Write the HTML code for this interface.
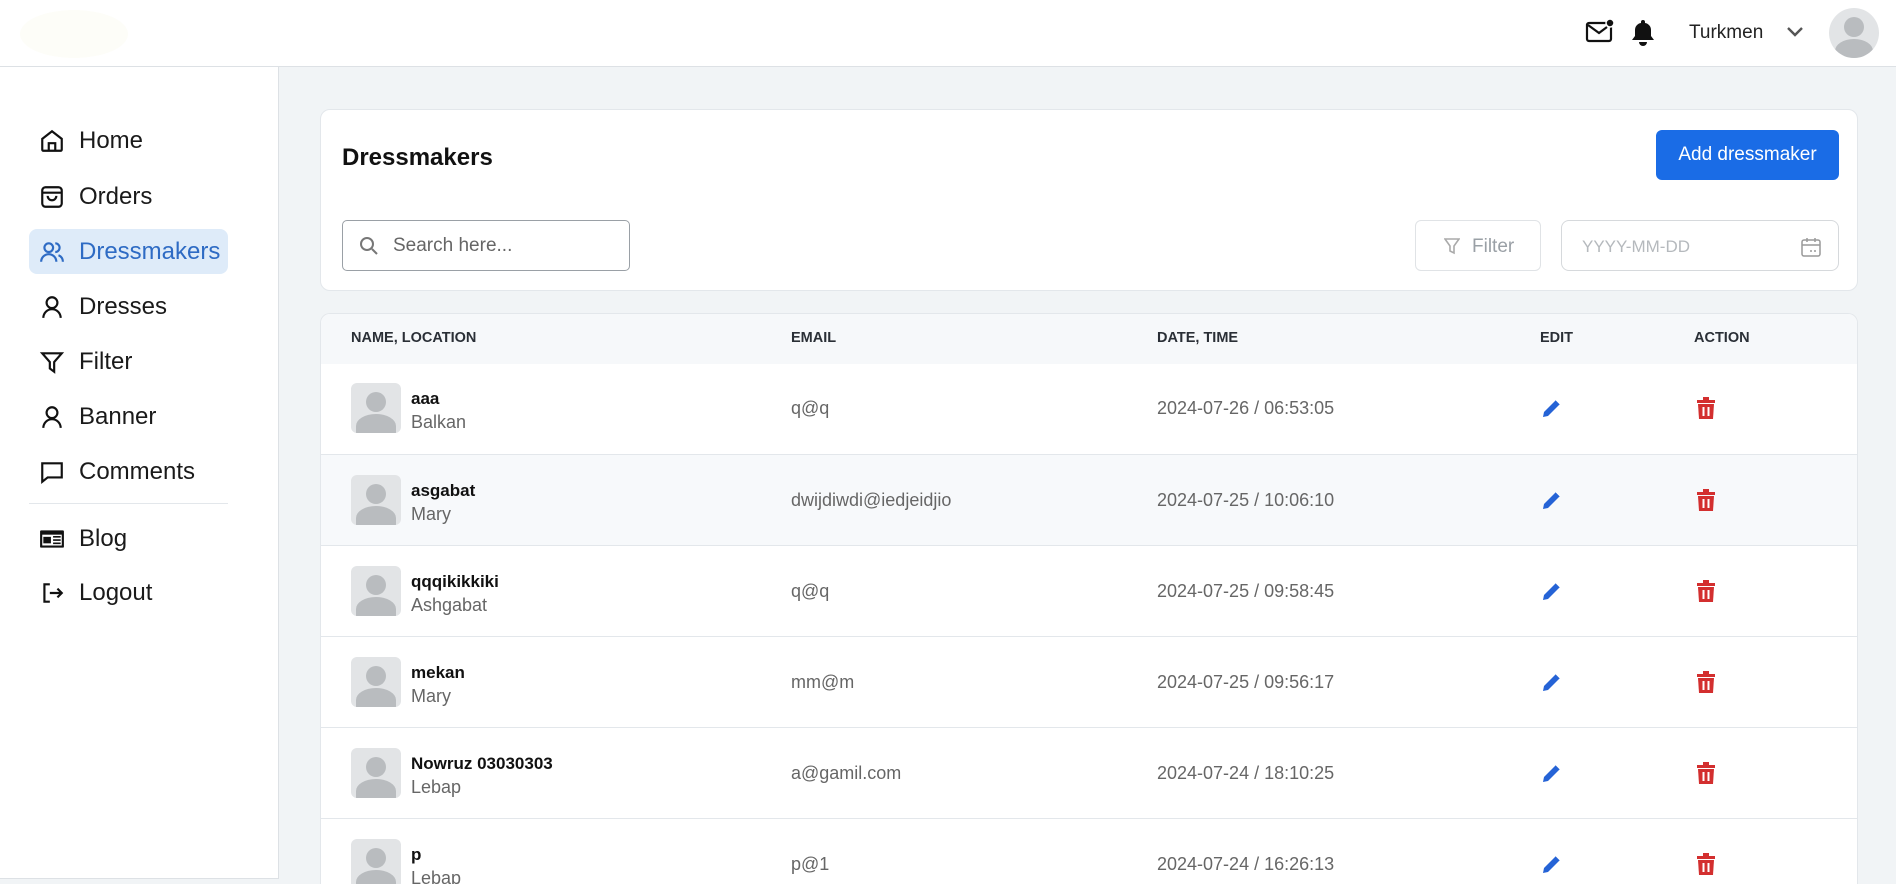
<!DOCTYPE html>
<html><head><meta charset="utf-8"><style>
*{box-sizing:border-box;margin:0;padding:0}
html{width:1896px;height:884px;overflow:hidden}
body{width:1896px;height:884px;overflow:hidden;background:#f1f4f6;font-family:"Liberation Sans",sans-serif;position:relative;color:#111}
.hdr{position:absolute;left:0;top:0;width:1896px;height:67px;background:#fff;border-bottom:1px solid #dde1e5}
.side{position:absolute;left:0;top:67px;width:279px;height:812px;background:#fff;border-right:1px solid #dde1e5;border-bottom:1px solid #dde1e5}
.nav{position:absolute;left:29px;width:199px;height:45px;display:flex;align-items:center;font-size:24px;color:#1a1a1a}
.nav svg{position:absolute;left:10px;width:26px;height:26px}
.nav span{position:absolute;left:50px}
.nav.act{background:#deebf9;border-radius:8px;color:#2e6bc4}
.card{position:absolute;background:#fff;border:1px solid #e3e7eb;border-radius:10px}
.abs{position:absolute}
.th{position:absolute;top:330px;font-size:14.5px;font-weight:bold;color:#2a2f36}
.row{position:absolute;left:321px;width:1536px;height:91px;border-top:1px solid #e3e7eb}
.av{position:absolute;left:30px;top:20px;width:50px;height:50px;border-radius:6px;background:#e2e4e6;overflow:hidden}
.nm{position:absolute;left:90px;top:26px;font-size:17px;font-weight:bold;color:#111}
.lc{position:absolute;left:90px;top:49px;font-size:18px;color:#666}
.em{position:absolute;left:470px;top:35px;font-size:18px;color:#666}
.dt{position:absolute;left:836px;top:35px;font-size:18px;color:#666}
.ed{position:absolute;left:1220px;top:34px}
.dl{position:absolute;left:1374px;top:33px}
</style></head><body>
<div class="hdr">
 <div class="abs" style="left:20px;top:10px;width:108px;height:48px;border-radius:50%;background:#fdfdf8"></div>
 <svg class="abs" style="left:1585px;top:18px" width="30" height="28" viewBox="0 0 30 28"><rect x="2" y="5" width="24" height="18" rx="2" fill="none" stroke="#111" stroke-width="2.2"/><path d="M3 7l11 8 8-6" fill="none" stroke="#111" stroke-width="2.2"/><circle cx="25" cy="5" r="4" fill="#111" stroke="#fff" stroke-width="1.5"/></svg>
 <svg class="abs" style="left:1631px;top:19px" width="24" height="27" viewBox="0 0 24 27"><path d="M12 1a2 2 0 0 1 2 2v1a7 7 0 0 1 6 7v6l3 4H1l3-4v-6a7 7 0 0 1 6-7V3a2 2 0 0 1 2-2z" fill="#111"/><path d="M8 23a4 4 0 0 0 8 0z" fill="#111"/></svg>
 <div class="abs" style="left:1689px;top:22px;font-size:19px;color:#222">Turkmen</div>
 <svg class="abs" style="left:1786px;top:26px" width="18" height="12" viewBox="0 0 18 12"><path d="M2 2l7 7 7-7" fill="none" stroke="#555" stroke-width="2.4"/></svg>
 <div class="abs" style="left:1829px;top:8px;width:50px;height:50px;border-radius:50%;background:#e2e4e6;overflow:hidden"><div class="abs" style="left:15px;top:9px;width:20px;height:20px;border-radius:50%;background:#b9bcbf"></div><div class="abs" style="left:6px;top:31px;width:38px;height:24px;border-radius:50% 50% 0 0;background:#b9bcbf"></div></div>
</div>
<div class="side">
 <div class="nav" style="top:51px"><svg viewBox="0 0 24 24" fill="none" stroke="#111" stroke-width="2"><path d="M3 10l9-7 9 7v10a1 1 0 0 1-1 1H4a1 1 0 0 1-1-1z"/><path d="M9 21v-7h6v7"/></svg><span>Home</span></div>
 <div class="nav" style="top:107px"><svg viewBox="0 0 24 24" fill="none" stroke="#111" stroke-width="2"><rect x="3" y="3" width="18" height="18" rx="3"/><path d="M3 8h18M8 11a4 4 0 0 0 8 0"/></svg><span>Orders</span></div>
 <div class="nav act" style="top:162px"><svg viewBox="0 0 24 24" fill="none" stroke="#2e6bc4" stroke-width="2"><circle cx="9" cy="8" r="4"/><path d="M2 21a7 7 0 0 1 14 0M15 4a4 4 0 0 1 0 8M18 15a6 6 0 0 1 4 6"/></svg><span>Dressmakers</span></div>
 <div class="nav" style="top:217px"><svg viewBox="0 0 24 24" fill="none" stroke="#111" stroke-width="2"><circle cx="12" cy="8" r="5"/><path d="M4 22a8 8 0 0 1 16 0"/></svg><span>Dresses</span></div>
 <div class="nav" style="top:272px"><svg viewBox="0 0 24 24" fill="none" stroke="#111" stroke-width="2"><path d="M3 4h18l-7 8v9l-4-3v-6z"/></svg><span>Filter</span></div>
 <div class="nav" style="top:327px"><svg viewBox="0 0 24 24" fill="none" stroke="#111" stroke-width="2"><circle cx="12" cy="8" r="5"/><path d="M4 22a8 8 0 0 1 16 0"/></svg><span>Banner</span></div>
 <div class="nav" style="top:382px"><svg viewBox="0 0 24 24" fill="none" stroke="#111" stroke-width="2"><path d="M3 4h18v13H8l-5 4z"/></svg><span>Comments</span></div>
 <div class="abs" style="left:29px;top:436px;width:199px;height:1px;background:#e3e7eb"></div>
 <div class="nav" style="top:449px"><svg viewBox="0 0 24 24"><rect x="1" y="4" width="22" height="16" rx="1" fill="#111"/><rect x="3" y="8" width="18" height="10" fill="#fff"/><rect x="4" y="10" width="7" height="6" fill="#111"/><path d="M13 10h7M13 13h7M13 16h7" stroke="#111" stroke-width="1.5"/></svg><span>Blog</span></div>
 <div class="nav" style="top:503px"><svg viewBox="0 0 24 24" fill="none" stroke="#111" stroke-width="2"><path d="M10 4H5v16h5M10 12h11M17 8l4 4-4 4"/></svg><span>Logout</span></div>
</div>
<div class="card" style="left:320px;top:109px;width:1538px;height:182px">
 <div class="abs" style="left:21px;top:34px;font-size:24px;font-weight:bold">Dressmakers</div>
 <div class="abs" style="left:1335px;top:20px;width:183px;height:50px;background:#1a6ce6;border-radius:6px;color:#fff;font-size:19px;text-align:center;line-height:50px">Add dressmaker</div>
 <div class="abs" style="left:21px;top:110px;width:288px;height:51px;border:1px solid #9aa0a6;border-radius:5px">
  <svg class="abs" style="left:16px;top:15px" width="20" height="20" viewBox="0 0 20 20" fill="none" stroke="#777" stroke-width="2"><circle cx="8" cy="8" r="6"/><path d="M13 13l5 5"/></svg>
  <div class="abs" style="left:50px;top:14px;font-size:19px;color:#666">Search here...</div>
 </div>
 <div class="abs" style="left:1094px;top:110px;width:126px;height:51px;border:1px solid #e0e3e6;border-radius:6px;color:#9aa0a6;font-size:19px">
  <svg class="abs" style="left:28px;top:16px" width="16" height="18" viewBox="0 0 16 18" fill="none" stroke="#aaa" stroke-width="1.6"><path d="M1 2h14l-5 7v7l-4-2V9z"/></svg>
  <div class="abs" style="left:56px;top:15px">Filter</div>
 </div>
 <div class="abs" style="left:1240px;top:110px;width:278px;height:51px;border:1px solid #d6d9dc;border-radius:8px;color:#b5b9bd;font-size:17px">
  <div class="abs" style="left:20px;top:16px">YYYY-MM-DD</div>
  <svg class="abs" style="left:238px;top:15px" width="22" height="22" viewBox="0 0 22 22" fill="none" stroke="#999" stroke-width="1.5"><rect x="2" y="4" width="18" height="16" rx="2"/><path d="M2 9h18M7 2v4M15 2v4M10 15h2M14 15h2"/></svg>
 </div>
</div>
<div class="card" style="left:320px;top:313px;width:1538px;height:571px;overflow:hidden;border-bottom:none;border-radius:10px 10px 0 0">
 <div class="abs" style="left:0;top:0;width:1538px;height:50px;background:#f6f8fa"></div>
</div>
<div class="th" style="left:351px">NAME, LOCATION</div>
<div class="th" style="left:791px">EMAIL</div>
<div class="th" style="left:1157px">DATE, TIME</div>
<div class="th" style="left:1540px">EDIT</div>
<div class="th" style="left:1694px">ACTION</div>

<div class="row" style="top:363px;border-top:none"><div class="av"><div class="abs" style="left:15px;top:9px;width:20px;height:20px;border-radius:50%;background:#b9bcbf"></div><div class="abs" style="left:5px;top:31px;width:40px;height:24px;border-radius:50% 50% 0 0;background:#b9bcbf"></div></div><div class="nm">aaa</div><div class="lc">Balkan</div><div class="em">q@q</div><div class="dt">2024-07-26 / 06:53:05</div>
<svg class="ed" width="22" height="22" viewBox="0 0 22 22"><path d="M2 20l1-5L15 3l4 4L7 19z" fill="#2563d6"/><path d="M15 3l4 4" stroke="#fff" stroke-width="1"/></svg><svg class="dl" width="22" height="24" viewBox="0 0 22 24"><path d="M2 4h18v3H2zM8 1h6v3H8z" fill="#d32f2f"/><path d="M3 8h16l-1 15H4z" fill="#d32f2f"/><path d="M8.5 11v9M13.5 11v9" stroke="#fff" stroke-width="2"/></svg></div>
<div class="row" style="top:454px;background:#f7f9fb"><div class="av"><div class="abs" style="left:15px;top:9px;width:20px;height:20px;border-radius:50%;background:#b9bcbf"></div><div class="abs" style="left:5px;top:31px;width:40px;height:24px;border-radius:50% 50% 0 0;background:#b9bcbf"></div></div><div class="nm">asgabat</div><div class="lc">Mary</div><div class="em">dwijdiwdi@iedjeidjio</div><div class="dt">2024-07-25 / 10:06:10</div>
<svg class="ed" width="22" height="22" viewBox="0 0 22 22"><path d="M2 20l1-5L15 3l4 4L7 19z" fill="#2563d6"/><path d="M15 3l4 4" stroke="#fff" stroke-width="1"/></svg><svg class="dl" width="22" height="24" viewBox="0 0 22 24"><path d="M2 4h18v3H2zM8 1h6v3H8z" fill="#d32f2f"/><path d="M3 8h16l-1 15H4z" fill="#d32f2f"/><path d="M8.5 11v9M13.5 11v9" stroke="#fff" stroke-width="2"/></svg></div>
<div class="row" style="top:545px"><div class="av"><div class="abs" style="left:15px;top:9px;width:20px;height:20px;border-radius:50%;background:#b9bcbf"></div><div class="abs" style="left:5px;top:31px;width:40px;height:24px;border-radius:50% 50% 0 0;background:#b9bcbf"></div></div><div class="nm">qqqikikkiki</div><div class="lc">Ashgabat</div><div class="em">q@q</div><div class="dt">2024-07-25 / 09:58:45</div>
<svg class="ed" width="22" height="22" viewBox="0 0 22 22"><path d="M2 20l1-5L15 3l4 4L7 19z" fill="#2563d6"/><path d="M15 3l4 4" stroke="#fff" stroke-width="1"/></svg><svg class="dl" width="22" height="24" viewBox="0 0 22 24"><path d="M2 4h18v3H2zM8 1h6v3H8z" fill="#d32f2f"/><path d="M3 8h16l-1 15H4z" fill="#d32f2f"/><path d="M8.5 11v9M13.5 11v9" stroke="#fff" stroke-width="2"/></svg></div>
<div class="row" style="top:636px"><div class="av"><div class="abs" style="left:15px;top:9px;width:20px;height:20px;border-radius:50%;background:#b9bcbf"></div><div class="abs" style="left:5px;top:31px;width:40px;height:24px;border-radius:50% 50% 0 0;background:#b9bcbf"></div></div><div class="nm">mekan</div><div class="lc">Mary</div><div class="em">mm@m</div><div class="dt">2024-07-25 / 09:56:17</div>
<svg class="ed" width="22" height="22" viewBox="0 0 22 22"><path d="M2 20l1-5L15 3l4 4L7 19z" fill="#2563d6"/><path d="M15 3l4 4" stroke="#fff" stroke-width="1"/></svg><svg class="dl" width="22" height="24" viewBox="0 0 22 24"><path d="M2 4h18v3H2zM8 1h6v3H8z" fill="#d32f2f"/><path d="M3 8h16l-1 15H4z" fill="#d32f2f"/><path d="M8.5 11v9M13.5 11v9" stroke="#fff" stroke-width="2"/></svg></div>
<div class="row" style="top:727px"><div class="av"><div class="abs" style="left:15px;top:9px;width:20px;height:20px;border-radius:50%;background:#b9bcbf"></div><div class="abs" style="left:5px;top:31px;width:40px;height:24px;border-radius:50% 50% 0 0;background:#b9bcbf"></div></div><div class="nm">Nowruz 03030303</div><div class="lc">Lebap</div><div class="em">a@gamil.com</div><div class="dt">2024-07-24 / 18:10:25</div>
<svg class="ed" width="22" height="22" viewBox="0 0 22 22"><path d="M2 20l1-5L15 3l4 4L7 19z" fill="#2563d6"/><path d="M15 3l4 4" stroke="#fff" stroke-width="1"/></svg><svg class="dl" width="22" height="24" viewBox="0 0 22 24"><path d="M2 4h18v3H2zM8 1h6v3H8z" fill="#d32f2f"/><path d="M3 8h16l-1 15H4z" fill="#d32f2f"/><path d="M8.5 11v9M13.5 11v9" stroke="#fff" stroke-width="2"/></svg></div>
<div class="row" style="top:818px;height:66px"><div class="av"><div class="abs" style="left:15px;top:9px;width:20px;height:20px;border-radius:50%;background:#b9bcbf"></div><div class="abs" style="left:5px;top:31px;width:40px;height:24px;border-radius:50% 50% 0 0;background:#b9bcbf"></div></div><div class="nm">p</div><div class="lc">Lebap</div><div class="em">p@1</div><div class="dt">2024-07-24 / 16:26:13</div>
<svg class="ed" width="22" height="22" viewBox="0 0 22 22"><path d="M2 20l1-5L15 3l4 4L7 19z" fill="#2563d6"/><path d="M15 3l4 4" stroke="#fff" stroke-width="1"/></svg><svg class="dl" width="22" height="24" viewBox="0 0 22 24"><path d="M2 4h18v3H2zM8 1h6v3H8z" fill="#d32f2f"/><path d="M3 8h16l-1 15H4z" fill="#d32f2f"/><path d="M8.5 11v9M13.5 11v9" stroke="#fff" stroke-width="2"/></svg></div>
</body></html>
